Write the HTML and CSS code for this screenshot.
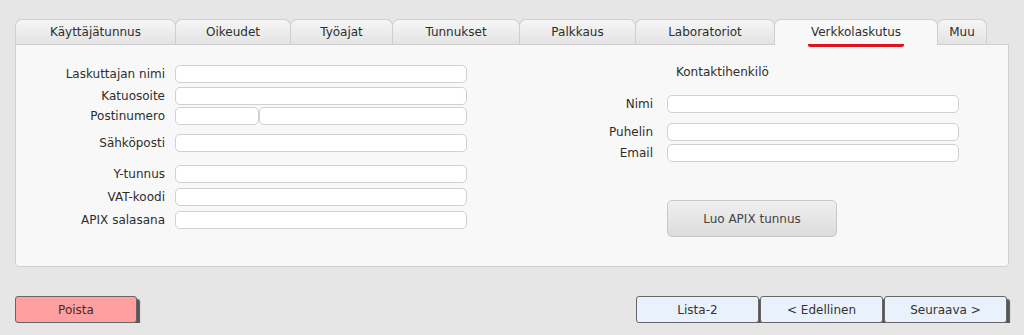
FILE: index.html
```html
<!DOCTYPE html>
<html lang="fi">
<head>
    <meta charset="UTF-8">
    <meta name="viewport" content="width=device-width, initial-scale=1.0">
    <title>Verkkolaskutus</title>
    <link rel="stylesheet" href="styles.css">
</head>
<body>
    <div class="page">
        <ul class="tabs">
            <li class="tab t1">Käyttäjätunnus</li>
            <li class="tab t2">Oikeudet</li>
            <li class="tab t3">Työajat</li>
            <li class="tab t4">Tunnukset</li>
            <li class="tab t5">Palkkaus</li>
            <li class="tab t6">Laboratoriot</li>
            <li class="tab t7 active"><span>Verkkolaskutus</span></li>
            <li class="tab t8">Muu</li>
        </ul>
        <div class="panel">
            <div class="col left">
                <div class="row r1">
                    <label>Laskuttajan nimi</label>
                    <input type="text">
                </div>
                <div class="row r2">
                    <label>Katuosoite</label>
                    <input type="text">
                </div>
                <div class="row r3">
                    <label>Postinumero</label>
                    <div class="pair">
                        <input type="text" class="zip">
                        <input type="text" class="city">
                    </div>
                </div>
                <div class="row r4">
                    <label>Sähköposti</label>
                    <input type="text">
                </div>
                <div class="row r5">
                    <label>Y-tunnus</label>
                    <input type="text">
                </div>
                <div class="row r6">
                    <label>VAT-koodi</label>
                    <input type="text">
                </div>
                <div class="row r7">
                    <label>APIX salasana</label>
                    <input type="text">
                </div>
            </div>
            <div class="col right">
                <p class="title">Kontaktihenkilö</p>
                <div class="row c1">
                    <label>Nimi</label>
                    <input type="text">
                </div>
                <div class="row c2">
                    <label>Puhelin</label>
                    <input type="text">
                </div>
                <div class="row c3">
                    <label>Email</label>
                    <input type="text">
                </div>
                <button class="apix">Luo APIX tunnus</button>
            </div>
        </div>
        <div class="actions">
            <button class="btn delete">Poista</button>
            <div class="nav">
                <button class="btn blue">Lista-2</button>
                <button class="btn blue">&lt; Edellinen</button>
                <button class="btn blue">Seuraava &gt;</button>
            </div>
        </div>
    </div>
</body>
</html>
```

FILE: styles.css
```css
* {
    padding: 0;
    margin: 0;
    box-sizing: border-box;
}
body {
    background-color: #e6e6e6;
    font-family: "DejaVu Sans", Verdana, sans-serif;
    font-size: 12px;
    color: #2e2e2e;
}
.page {
    width: 1024px;
    padding: 19px 15px 0 15px;
}
.tabs {
    list-style: none;
    display: flex;
    height: 25px;
}
.tab {
    height: 25px;
    line-height: 25px;
    text-align: center;
    border: 1px solid #cfcfcf;
    border-bottom: none;
    border-radius: 7px 7px 0 0;
    background: linear-gradient(#f6f6f6, #e3e3e3);
    margin-right: -1px;
}
.t1 { width: 161px; }
.t2 { width: 116px; }
.t3 { width: 103px; }
.t4 { width: 128px; }
.t5 { width: 117px; }
.t6 { width: 140px; }
.t7 { width: 164px; }
.t8 { width: 50px; }
.tab.active {
    background: #f8f8f8;
    position: relative;
    z-index: 1;
    height: 26px;
}
.tab.active span {
    display: inline-block;
    line-height: 23px;
    border-bottom: 3px solid #e0141e;
    border-radius: 2px;
    padding: 0 3px;
}
.panel {
    width: 994px;
    height: 223px;
    background-color: #f8f8f8;
    border: 1px solid #cfcfcf;
    border-radius: 0 0 4px 4px;
    display: flex;
    padding: 20px 0 0 9px;
}
.col {
    display: flex;
    flex-direction: column;
}
.left {
    width: 442px;
}
.right {
    margin-left: 133px;
}
.row {
    display: flex;
    align-items: center;
    height: 18px;
}
.row label {
    text-align: right;
    padding-right: 10px;
}
.left label {
    width: 150px;
}
.right label {
    width: 67px;
    padding-right: 14px;
}
.row input {
    width: 292px;
    height: 18px;
    border: 1px solid #d0d0d0;
    border-radius: 5px;
    background-color: #fff;
}
.pair {
    display: flex;
    width: 292px;
}
.row .zip {
    width: 84px;
}
.row .city {
    width: 208px;
}
.r2 { margin-top: 4px; }
.r3 { margin-top: 2px; }
.r4 { margin-top: 9px; }
.r5 { margin-top: 13px; }
.r6 { margin-top: 5px; }
.r7 { margin-top: 5px; }
.title {
    margin: 0 0 0 76px;
    line-height: 15px;
}
.c1 { margin-top: 15px; }
.c2 { margin-top: 10px; }
.c3 { margin-top: 3px; }
.apix {
    margin: 38px 0 0 67px;
    width: 170px;
    height: 37px;
    border: 1px solid #c8c8c8;
    border-radius: 5px;
    background: linear-gradient(#f0f0f0, #dcdcdc);
    font-family: inherit;
    font-size: 12px;
    color: #444;
}
.actions {
    display: flex;
    justify-content: space-between;
    margin-top: 29px;
    width: 992px;
}
.nav {
    display: flex;
    gap: 1px;
}
.btn {
    width: 123px;
    height: 27px;
    border: 1px solid #666;
    border-radius: 3px;
    box-shadow: 3px 3px 1px #555;
    font-family: inherit;
    font-size: 12px;
    color: #333;
}
.delete {
    width: 122px;
    background-color: #ff9f9f;
    color: #4a2a2a;
}
.blue {
    background-color: #e9f2fc;
}
```
